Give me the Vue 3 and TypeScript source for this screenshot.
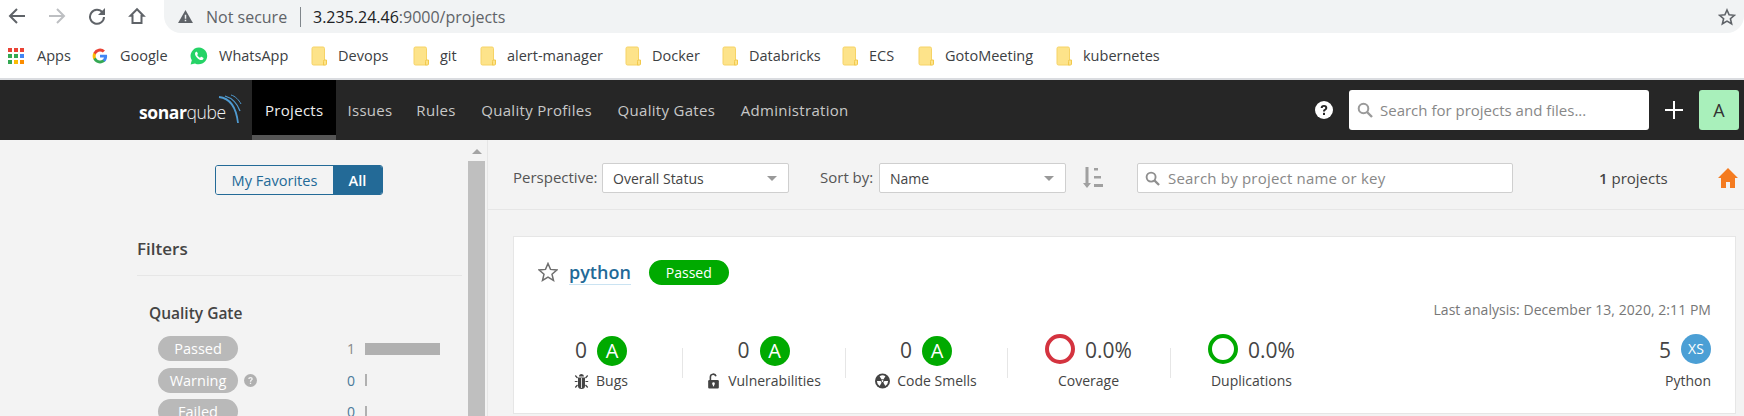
<script setup lang="ts">
const bookmarks = [
  { name: 'Devops', w: 102 },
  { name: 'git', w: 67 },
  { name: 'alert-manager', w: 145 },
  { name: 'Docker', w: 97 },
  { name: 'Databricks', w: 120 },
  { name: 'ECS', w: 76 },
  { name: 'GotoMeeting', w: 138 },
  { name: 'kubernetes', w: 100 },
]
const navItems = ['Issues', 'Rules', 'Quality Profiles', 'Quality Gates', 'Administration']
const colors = ['#ea4335', '#ea4335', '#ea4335', '#34a853', '#34a853', '#4285f4', '#34a853', '#fbbc05', '#fb8c00']
const gates = [
  { name: 'Passed', count: '1', bar: 75, muted: true },
  { name: 'Warning', count: '0', bar: 2, help: true },
  { name: 'Failed', count: '0', bar: 2 },
]
</script>

<template>
  <div class="page">
    <div class="chrome">
      <div class="chrome-btns">
        <svg class="cbtn" viewBox="0 0 18 18"><path d="M17 9H2M9 2 2 9l7 7" fill="none" stroke="#5f6368" stroke-width="2"/></svg>
        <svg class="cbtn" viewBox="0 0 18 18"><path d="M1 9h15M9 2l7 7-7 7" fill="none" stroke="#bdbfc2" stroke-width="2"/></svg>
        <svg class="cbtn" viewBox="0 0 18 18"><path d="M14.500 5.500A7 7 0 1 0 16 10" fill="none" stroke="#5f6368" stroke-width="2"/><path d="M17 1v7h-7z" fill="#5f6368"/></svg>
        <svg class="cbtn" viewBox="0 0 18 18"><path d="M9 2.200 2.500 8.800h2V16h9V8.800h2z" fill="none" stroke="#5f6368" stroke-width="2" stroke-linejoin="miter"/></svg>
      </div>
      <div class="omnibox">
        <svg class="warn" viewBox="0 0 16 14"><path d="M8 0 16 14H0z" fill="#5f6368"/><path d="M7.200 5h1.600v4.500H7.200zM7.200 10.500h1.600V12H7.200z" fill="#f1f3f4"/></svg>
        <span class="ns">Not secure</span>
        <span class="omni-sep"></span>
        <span class="url"><b>3.235.24.46</b>:9000/projects</span>
        <svg class="bstar" viewBox="0 0 18 18"><path d="m9 2 2.100 4.800 5.200.5-3.900 3.400 1.200 5.100L9 13.100l-4.600 2.700 1.200-5.100-3.900-3.400 5.200-.5z" fill="none" stroke="#5f6368" stroke-width="1.600"/></svg>
      </div>
    </div>

    <div class="bookmarks">
      <span class="bm bm-apps">
        <span class="apps"><i v-for="(c, i) in colors" :key="i" :style="{ background: c }"></i></span>
        <span>Apps</span>
      </span>
      <span class="bm bm-google">
        <svg class="bm-ico" viewBox="0 0 18 18">
          <path d="M17 9.200c0-.6-.1-1.200-.2-1.700H9v3.300h4.500a3.900 3.900 0 0 1-1.700 2.500v2.100h2.700c1.600-1.500 2.500-3.600 2.500-6.200z" fill="#4285f4"/>
          <path d="M9 17.300c2.200 0 4.100-.7 5.500-2l-2.700-2.100c-.7.500-1.700.8-2.800.8-2.200 0-4-1.500-4.600-3.400H1.600v2.100A8.300 8.300 0 0 0 9 17.300z" fill="#34a853"/>
          <path d="M4.400 10.600a5 5 0 0 1 0-3.200V5.300H1.600a8.300 8.300 0 0 0 0 7.400z" fill="#fbbc05"/>
          <path d="M9 4c1.200 0 2.300.4 3.200 1.200l2.400-2.400A8.300 8.300 0 0 0 1.600 5.300l2.800 2.100C5 5.500 6.800 4 9 4z" fill="#ea4335"/>
        </svg>
        <span>Google</span>
      </span>
      <span class="bm bm-wa">
        <svg class="bm-ico wa" viewBox="0 0 18 18">
          <path d="M9 .5a8.400 8.400 0 0 0-7.200 12.700L.6 17.500l4.400-1.100A8.400 8.400 0 1 0 9 .5z" fill="#25d366"/>
          <path d="M6.300 4.800c-.4 0-1.300.7-1.300 2 0 2.500 3.500 6.300 6.400 6.300 1.300 0 2.100-1 2.100-1.700 0-.4-.1-.6-.3-.7l-1.800-.9c-.3-.1-.5 0-.7.300l-.6.700c-.8-.2-2.400-1.700-2.900-2.900l.5-.6c.2-.3.200-.5.100-.8l-.7-1.400c-.1-.2-.3-.3-.8-.3z" fill="#fff"/>
        </svg>
        <span>WhatsApp</span>
      </span>
      <span v-for="b in bookmarks" :key="b.name" class="bm bm-folder" :style="{ width: b.w + 'px' }">
        <svg class="folder" viewBox="0 0 16 20">
          <path d="M1 2.500A1.500 1.500 0 0 1 2.500 1H12a1.500 1.500 0 0 1 1.500 1.500V19H2.500A1.500 1.500 0 0 1 1 17.500z" fill="#fde38a" stroke="#f6d366"/>
          <path d="M13 14h2.500v4a1 1 0 0 1-1 1H12.500v-3.500a1.500 1.500 0 0 1 .5-1.500z" fill="#fde38a" stroke="#f2c94c"/>
        </svg>
        <span>{{ b.name }}</span>
      </span>
    </div>

    <nav class="nav">
      <div class="logo">
        <span class="logo-text"><b>sonar</b>qube</span>
        <svg class="logo-arcs" viewBox="0 0 24 32">
          <path d="M1 3c10 1 17 9 19 26" fill="none" stroke="#4f9bd1" stroke-width="1.800"/>
          <path d="M7 2c7 2 12 7 15 15" fill="none" stroke="#4f9bd1" stroke-width="1.300"/>
          <path d="M13 1c4 1 8 5 10 9" fill="none" stroke="#4f9bd1" stroke-width="1"/>
        </svg>
      </div>
      <a class="tab active">Projects</a>
      <a v-for="n in navItems" :key="n" class="tab">{{ n }}</a>
      <div class="nav-right">
        <svg class="help" viewBox="0 0 18 18">
          <circle cx="9" cy="9" r="9" fill="#fff"/>
          <path d="M5.700 7a3.300 3 0 0 1 6.600 0c0 2.100-2.400 2-2.400 3.600H8c0-2.600 2.300-2.500 2.300-3.600a1.300 1.200 0 0 0-2.600 0z" fill="#262626"/>
          <rect x="8" y="11.800" width="2" height="2.200" fill="#262626"/>
        </svg>
        <div class="global-search">
          <svg class="mag" viewBox="0 0 16 16"><circle cx="6.500" cy="6.500" r="4.800" fill="none" stroke="#9a9a9a" stroke-width="2"/><path d="m10 10 5 5" stroke="#9a9a9a" stroke-width="2.400"/></svg>
          <span>Search for projects and files...</span>
        </div>
        <svg class="plus" viewBox="0 0 18 18"><path d="M9 0v18M0 9h18" stroke="#fff" stroke-width="2"/></svg>
        <div class="avatar">A</div>
      </div>
    </nav>

    <div class="main">
      <aside class="side">
        <div class="side-body">
          <div class="toggle">
            <span class="tg tg-off">My Favorites</span>
            <span class="tg tg-on">All</span>
          </div>
          <h3 class="filters">Filters</h3>
          <div class="facet">
            <h4>Quality Gate</h4>
            <div v-for="g in gates" :key="g.name" class="gate">
              <span class="gate-pill">{{ g.name }}</span>
              <svg v-if="g.help" class="gate-help" viewBox="0 0 14 14">
                <circle cx="7" cy="7" r="7" fill="#b0b0b0"/>
                <path d="M4.500 5.500a2.500 2.300 0 0 1 5 0c0 1.500-1.800 1.500-1.800 2.800H6.300c0-1.900 1.700-1.900 1.700-2.800a1 .9 0 0 0-2 0zM6.300 9.300h1.400v1.500H6.300z" fill="#f3f3f3"/>
              </svg>
              <span class="gate-count" :class="{ muted: g.muted }">{{ g.count }}</span>
              <span class="gate-bar" :style="{ width: g.bar + 'px' }"></span>
            </div>
          </div>
        </div>
        <div class="scroll">
          <span class="scroll-up"></span>
          <span class="scroll-thumb"></span>
        </div>
      </aside>

      <section class="content">
        <div class="toolbar">
          <span class="lbl lbl-p">Perspective:</span>
          <div class="select">Overall Status<i class="caret"></i></div>
          <span class="lbl lbl-s">Sort by:</span>
          <div class="select">Name<i class="caret"></i></div>
          <svg class="sort" viewBox="0 0 20 22">
            <path d="M2.500 0h3v16H8l-4 5-4-5h2.500z" fill="#a0a0a0"/>
            <path d="M11 1h4v2.500h-4zM11 9h7v2.500h-7zM11 17h9v3h-9z" fill="#a0a0a0"/>
          </svg>
          <div class="psearch">
            <svg class="mag" viewBox="0 0 16 16"><circle cx="6.500" cy="6.500" r="4.800" fill="none" stroke="#8f8f8f" stroke-width="2"/><path d="m10 10 5 5" stroke="#8f8f8f" stroke-width="2.400"/></svg>
            <span>Search by project name or key</span>
          </div>
          <span class="pcount"><b>1</b> projects</span>
          <svg class="home" viewBox="0 0 20 20"><path d="M10 0 0 10h3v10h5v-6h4v6h5V10h3z" fill="#f47b20"/></svg>
        </div>

        <article class="card">
          <div class="card-top">
            <svg class="star" viewBox="0 0 20 20"><path d="m10 1.500 2.500 5.900 6.300.6-4.800 4.200 1.500 6.200L10 15.100l-5.500 3.300L6 12.200 1.200 8l6.300-.6z" fill="none" stroke="#6f6f6f" stroke-width="1.500"/></svg>
            <a class="pname">python</a>
            <span class="qg">Passed</span>
          </div>
          <div class="analysis">Last analysis: December 13, 2020, 2:11 PM</div>
          <div class="metrics">
            <div class="metric m-bugs">
              <div class="mval"><span>0</span><i class="rating">A</i></div>
              <div class="mlbl">
                <svg class="mico" viewBox="0 0 14 16">
                  <path d="M4.500 3.500a2.500 2.500 0 0 1 5 0zM3.500 4.500h7v8.500a3.500 3 0 0 1-7 0z" fill="#444"/>
                  <path d="M3 5 .8 2.500M11 5l2.200-2.500M3 8.500H.3M11 8.500h2.700M3 12l-2.200 2.500M11 12l2.200 2.500" stroke="#444" stroke-width="1.200"/>
                  <path d="M7 5v10" stroke="#fff" stroke-width=".8"/>
                </svg>
                <span>Bugs</span>
              </div>
            </div>
            <div class="metric m-vuln">
              <div class="mval"><span>0</span><i class="rating">A</i></div>
              <div class="mlbl">
                <svg class="mico" viewBox="0 0 14 18">
                  <path d="M3.500 8V4.500a3.200 3.200 0 0 1 6.300-.8" fill="none" stroke="#444" stroke-width="1.800"/>
                  <rect x="1" y="8" width="12" height="9.500" rx="1.300" fill="#444"/>
                  <circle cx="7" cy="12" r="1.500" fill="#fff"/>
                  <rect x="6.300" y="12" width="1.400" height="3" fill="#fff"/>
                </svg>
                <span>Vulnerabilities</span>
              </div>
            </div>
            <div class="metric m-smell">
              <div class="mval"><span>0</span><i class="rating">A</i></div>
              <div class="mlbl">
                <svg class="mico" viewBox="0 0 16 16">
                  <circle cx="8" cy="8" r="8" fill="#444"/>
                  <path d="M8 8 4.900 2.800a6 6 0 0 1 6.200 0zM8 8l6 .1a6 6 0 0 1-3 5.100zM8 8l-3 5.200A6 6 0 0 1 2 8.100z" fill="#fff"/>
                  <circle cx="8" cy="8" r="1.900" fill="#444"/>
                  <circle cx="8" cy="8" r="1" fill="#fff"/>
                </svg>
                <span>Code Smells</span>
              </div>
            </div>
            <div class="metric m-cov">
              <div class="mval"><i class="ring red"></i><span>0.0%</span></div>
              <div class="mlbl">Coverage</div>
            </div>
            <div class="metric m-dup">
              <div class="mval"><i class="ring green"></i><span>0.0%</span></div>
              <div class="mlbl">Duplications</div>
            </div>
            <div class="metric m-size">
              <div class="mval"><span>5</span><i class="xs">XS</i></div>
              <div class="mlbl">Python</div>
            </div>
          </div>
        </article>
      </section>
    </div>
  </div>
</template>

<style>
html, body { margin: 0; background: #fff; overflow: hidden; }
</style>

<style scoped>
.page {
  width: 1744px;
  height: 416px;
  overflow: hidden;
  display: flex;
  flex-direction: column;
  font-family: "Open Sans", "Noto Sans", sans-serif;
  color: #444;
  font-size: 14px;
}
.chrome {
  height: 33px;
  flex: none;
  display: flex;
  background: #fff;
}
.chrome-btns {
  width: 164px;
  flex: none;
  display: flex;
  gap: 22px;
  padding: 7px 0 0 8px;
  box-sizing: border-box;
}
.cbtn { width: 18px; height: 18px; }
.omnibox {
  flex: 1;
  background: #f1f3f4;
  border-radius: 0 0 17px 17px;
  display: flex;
  align-items: center;
  padding: 0 8px 0 14px;
  font-size: 16px;
  color: #5f6368;
}
.warn { width: 15px; height: 13px; margin-right: 13px; }
.ns { width: 88px; }
.omni-sep { width: 1px; height: 20px; background: #80868b; margin: 0 12px 0 6px; }
.url b { font-weight: 400; color: #202124; }
.bstar { width: 18px; height: 18px; margin-left: auto; }
.bookmarks {
  height: 47px;
  flex: none;
  box-sizing: border-box;
  background: #fff;
  border-bottom: 2px solid #dadce0;
  display: flex;
  align-items: center;
  padding: 0 0 0 8px;
  font-size: 14.500px;
  color: #3c4043;
}
.bm { display: flex; align-items: center; flex: none; white-space: nowrap; }
.bm-apps { width: 84px; gap: 13px; }
.apps { display: grid; grid-template-columns: repeat(3, 4px); gap: 2px; }
.apps i { width: 4px; height: 4px; }
.bm-google { width: 98px; gap: 12px; }
.bm-wa { width: 121px; gap: 11px; }
.bm-ico { width: 16px; height: 18px; flex: none; }
.bm-ico.wa { width: 18px; }
.bm-folder { gap: 11px; }
.folder { width: 16px; height: 20px; flex: none; }
.nav {
  height: 60px;
  flex: none;
  background: #262626;
  display: flex;
  align-items: center;
  padding-left: 139px;
}
.logo { width: 113px; height: 60px; flex: none; display: flex; align-items: center; position: relative; }
.logo-text {
  font-size: 17.500px;
  letter-spacing: -.4px;
  color: #f2f2f2;
  font-weight: 300;
  padding-top: 4px;
}
.logo-text b { font-weight: 700; color: #fff; }
.logo-arcs { position: absolute; left: 79px; top: 14px; width: 24px; height: 32px; }
.tab {
  height: 60px;
  box-sizing: border-box;
  display: flex;
  align-items: center;
  padding: 0 12.800px;
  color: #c8c8c8;
  font-size: 15px;
  letter-spacing: .3px;
  white-space: nowrap;
}
.tab.active {
  background: #000;
  color: #eee;
  border-bottom: 5px solid #555;
  padding: 5px 13px 0;
}
.active + .tab { padding: 0 11px; }
.nav-right {
  margin-left: auto;
  padding-right: 5px;
  display: flex;
  align-items: center;
}
.help { width: 18px; height: 18px; margin-right: 16px; }
.global-search {
  width: 300px;
  height: 40px;
  background: #fff;
  border-radius: 3px;
  box-sizing: border-box;
  padding-left: 8px;
  display: flex;
  align-items: center;
  gap: 7px;
  font-size: 15px;
  color: #888;
}
.global-search .mag { width: 16px; height: 16px; }
.plus { width: 18px; height: 18px; margin: 0 16px; }
.avatar {
  width: 40px;
  height: 40px;
  border-radius: 3px;
  background: #a9f0bb;
  color: #333;
  display: flex;
  align-items: center;
  justify-content: center;
  font-size: 18px;
}
.main {
  flex: 1;
  display: flex;
  min-height: 0;
  background: #f3f3f3;
}
.side {
  width: 488px;
  flex: none;
  box-sizing: border-box;
  border-right: 1px solid #e6e6e6;
  display: flex;
}
.side-body {
  width: 325px;
  margin-left: 137px;
  flex: none;
}
.toggle {
  display: flex;
  width: 168px;
  height: 30px;
  margin: 25px 0 0 78px;
  border: 1px solid #236a97;
  border-radius: 3px;
  box-sizing: border-box;
  overflow: hidden;
  font-size: 14.600px;
  font-weight: 600;
}
.tg { display: flex; align-items: center; justify-content: center; }
.tg-off { width: 117px; color: #236a97; font-weight: 400; background: #f3f3f3; }
.tg-on { flex: 1; background: #236a97; color: #fff; }
.filters {
  margin: 42px 0 0;
  font-size: 17px;
  font-weight: 600;
  line-height: 24px;
  height: 39px;
  box-sizing: border-box;
  border-bottom: 1px solid #e6e6e6;
  color: #444;
}
.facet { padding: 26px 0 0 12px; }
.facet h4 {
  margin: 0 0 12px;
  font-size: 15.500px;
  font-weight: 600;
  line-height: 22px;
  color: #444;
}
.gate {
  display: flex;
  align-items: center;
  height: 25px;
  margin: 0 0 6.500px 9px;
  position: relative;
}
.gate-pill {
  width: 80px;
  height: 25px;
  border-radius: 13px;
  background: #b9b9b9;
  color: #fff;
  display: flex;
  align-items: center;
  justify-content: center;
  font-size: 14.500px;
  flex: none;
}
.gate-help { width: 13px; height: 13px; margin-left: 6px; }
.gate-count {
  position: absolute;
  right: 107px;
  color: #4a7a9a;
  font-size: 14px;
}
.gate-count.muted { color: #888; }
.gate-bar {
  position: absolute;
  left: 207px;
  height: 12px;
  background: #b0b0b0;
}
.scroll {
  width: 17px;
  margin-left: 6px;
  display: flex;
  flex-direction: column;
  flex: none;
}
.scroll-up {
  height: 21px;
  flex: none;
  position: relative;
}
.scroll-up::after {
  content: "";
  position: absolute;
  left: 4px;
  top: 9px;
  border-left: 5px solid transparent;
  border-right: 5px solid transparent;
  border-bottom: 5px solid #a3a3a3;
}
.scroll-thumb { flex: 1; background: #bfbfbf; }
.content { flex: 1; min-width: 0; }
.toolbar {
  height: 70px;
  box-sizing: border-box;
  border-bottom: 1px solid #e6e6e6;
  display: flex;
  align-items: center;
  padding: 7px 6px 0 25px;
}
.lbl { color: #555; font-size: 15px; margin-top: -2px; white-space: nowrap; }
.lbl-p { width: 89px; flex: none; }
.lbl-s { width: 59px; margin-left: 31px; flex: none; }
.select {
  width: 187px;
  height: 30px;
  box-sizing: border-box;
  flex: none;
  background: #fff;
  border: 1px solid #cfcfcf;
  border-radius: 2px;
  display: flex;
  align-items: center;
  padding-left: 10px;
  font-size: 14px;
  color: #444;
  position: relative;
}
.caret {
  position: absolute;
  right: 11px;
  top: 12px;
  border-left: 5px solid transparent;
  border-right: 5px solid transparent;
  border-top: 5px solid #999;
}
.sort { width: 20px; height: 22px; margin-left: 17px; flex: none; }
.psearch {
  width: 376px;
  height: 30px;
  box-sizing: border-box;
  margin-left: 34px;
  background: #fff;
  border: 1px solid #cfcfcf;
  border-radius: 2px;
  display: flex;
  align-items: center;
  gap: 8px;
  padding-left: 7px;
  font-size: 15px;
  letter-spacing: .2px;
  color: #888;
  flex: none;
}
.psearch .mag { width: 15px; height: 15px; }
.pcount { margin-left: 86px; font-size: 15px; color: #444; }
.pcount b { font-weight: 600; }
.home { width: 20px; height: 20px; margin-left: auto; }
.card {
  margin: 26px 8px 0 25px;
  height: 178px;
  box-sizing: border-box;
  background: #fff;
  border: 1px solid #e6e6e6;
}
.card-top {
  display: flex;
  align-items: center;
  height: 26px;
  padding: 22px 0 0 24px;
}
.star { width: 20px; height: 20px; flex: none; }
.pname {
  margin-left: 11px;
  font-size: 18px;
  font-weight: 600;
  color: #236a97;
  border-bottom: 1px solid #cae3f2;
  line-height: 24px;
  height: 24px;
}
.qg {
  margin-left: 18px;
  width: 80px;
  height: 25px;
  border-radius: 13px;
  background: #00aa00;
  color: #fff;
  font-size: 14px;
  display: flex;
  align-items: center;
  justify-content: center;
}
.analysis {
  margin-top: 16px;
  padding-right: 24px;
  text-align: right;
  font-size: 14px;
  letter-spacing: .05px;
  color: #777;
  line-height: 18px;
}
.metrics {
  display: flex;
  margin-top: 15px;
  height: 64px;
}
.metric {
  box-sizing: border-box;
  display: flex;
  flex-direction: column;
  align-items: center;
  flex: none;
  position: relative;
}
.metric + .metric:not(.m-size)::before {
  content: "";
  position: absolute;
  left: 0;
  top: 14px;
  height: 30px;
  width: 1px;
  background: #e6e6e6;
}
.m-bugs { width: 168px; padding-left: 6px; }
.m-vuln { width: 163px; }
.m-smell { width: 162px; }
.m-cov { width: 163px; }
.m-dup { width: 163px; }
.m-size { margin-left: auto; margin-right: 24px; align-items: flex-end; }
.mval {
  display: flex;
  align-items: center;
  height: 32px;
  gap: 10px;
  font-size: 21px;
  color: #444;
  line-height: 30px;
}
.rating, .xs, .ring {
  width: 30px;
  height: 30px;
  border-radius: 50%;
  box-sizing: border-box;
  display: flex;
  align-items: center;
  justify-content: center;
  font-style: normal;
  color: #fff;
  flex: none;
}
.rating { background: #00aa00; font-size: 20px; align-self: flex-end; }
.xs { background: #4b9fd5; font-size: 14px; align-self: flex-start; }
.ring { border: 4px solid; align-self: flex-start; }
.ring.red { border-color: #d4333f; }
.ring.green { border-color: #00aa00; }
.mlbl {
  display: flex;
  align-items: center;
  gap: 7px;
  margin-top: 4px;
  font-size: 14px;
  line-height: 22px;
  color: #444;
  white-space: nowrap;
}
.mico { height: 16px; width: 15px; flex: none; }
</style>
